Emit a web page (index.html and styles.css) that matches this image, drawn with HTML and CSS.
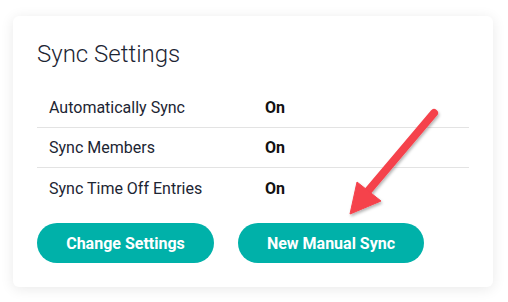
FILE: index.html
```html
<!DOCTYPE html>
<html>
<head>
<meta charset="utf-8">
<link rel="stylesheet" href="styles.css">
</head>
<body>
<div class="card">
  <h2 class="title">Sync Settings</h2>
  <div class="rows">
    <div class="row"><span class="label">Automatically Sync</span><span class="value">On</span></div>
    <div class="row"><span class="label">Sync Members</span><span class="value">On</span></div>
    <div class="row"><span class="label">Sync Time Off Entries</span><span class="value">On</span></div>
  </div>
  <div class="actions">
    <button class="btn btn-change">Change Settings</button>
    <button class="btn btn-sync">New Manual Sync</button>
  </div>
</div>
<svg class="arrow" width="508" height="302" viewBox="0 0 508 302">
  <defs>
    <filter id="sh" x="-20%" y="-20%" width="140%" height="140%">
      <feDropShadow dx="1" dy="2" stdDeviation="1.5" flood-color="#000" flood-opacity="0.3"/>
    </filter>
  </defs>
  <g filter="url(#sh)" fill="#f5424c" stroke="#f5424c">
    <line x1="434" y1="113" x2="368" y2="191" stroke-width="8" stroke-linecap="round"/>
    <polygon points="350,214 357,182 381,201" stroke-width="1" stroke-linejoin="round"/>
  </g>
</svg>
</body>
</html>
```
FILE: styles.css
```css
html, body {
  margin: 0;
  background: #ffffff;
}
body {
  padding: 16px 15px 15px 13px;
  font-family: Roboto, "Liberation Sans", sans-serif;
  position: relative;
  width: 480px;
}
.card {
  background: #fff;
  border-radius: 6px;
  box-shadow: 0 2px 14px rgba(0, 0, 0, 0.09);
  padding: 24px 24px 24px 24px;
  height: 271px;
  box-sizing: border-box;
}
.title {
  margin: 0 0 20px 0;
  font-size: 24px;
  line-height: 28px;
  font-weight: 300;
  color: #1c2533;
}
.row {
  display: grid;
  grid-template-columns: 216px 1fr;
  padding-left: 12px;
  height: 40px;
  align-items: center;
  border-bottom: 1px solid #e3e3e3;
  box-sizing: border-box;
  font-size: 16px;
}
.row:last-child {
  border-bottom: none;
}
.label {
  color: #1c2533;
}
.value {
  font-weight: 700;
  color: #111;
}
.actions {
  display: flex;
  gap: 24px;
  margin-top: 15px;
}
.btn {
  height: 40px;
  border: none;
  border-radius: 20px;
  background: #00b1a9;
  color: #fff;
  font-family: Roboto, "Liberation Sans", sans-serif;
  font-weight: 700;
  font-size: 16px;
  padding: 0;
}
.btn-change { width: 177px; }
.btn-sync { width: 186px; }
.arrow {
  position: absolute;
  left: 0;
  top: 0;
  pointer-events: none;
}
```
